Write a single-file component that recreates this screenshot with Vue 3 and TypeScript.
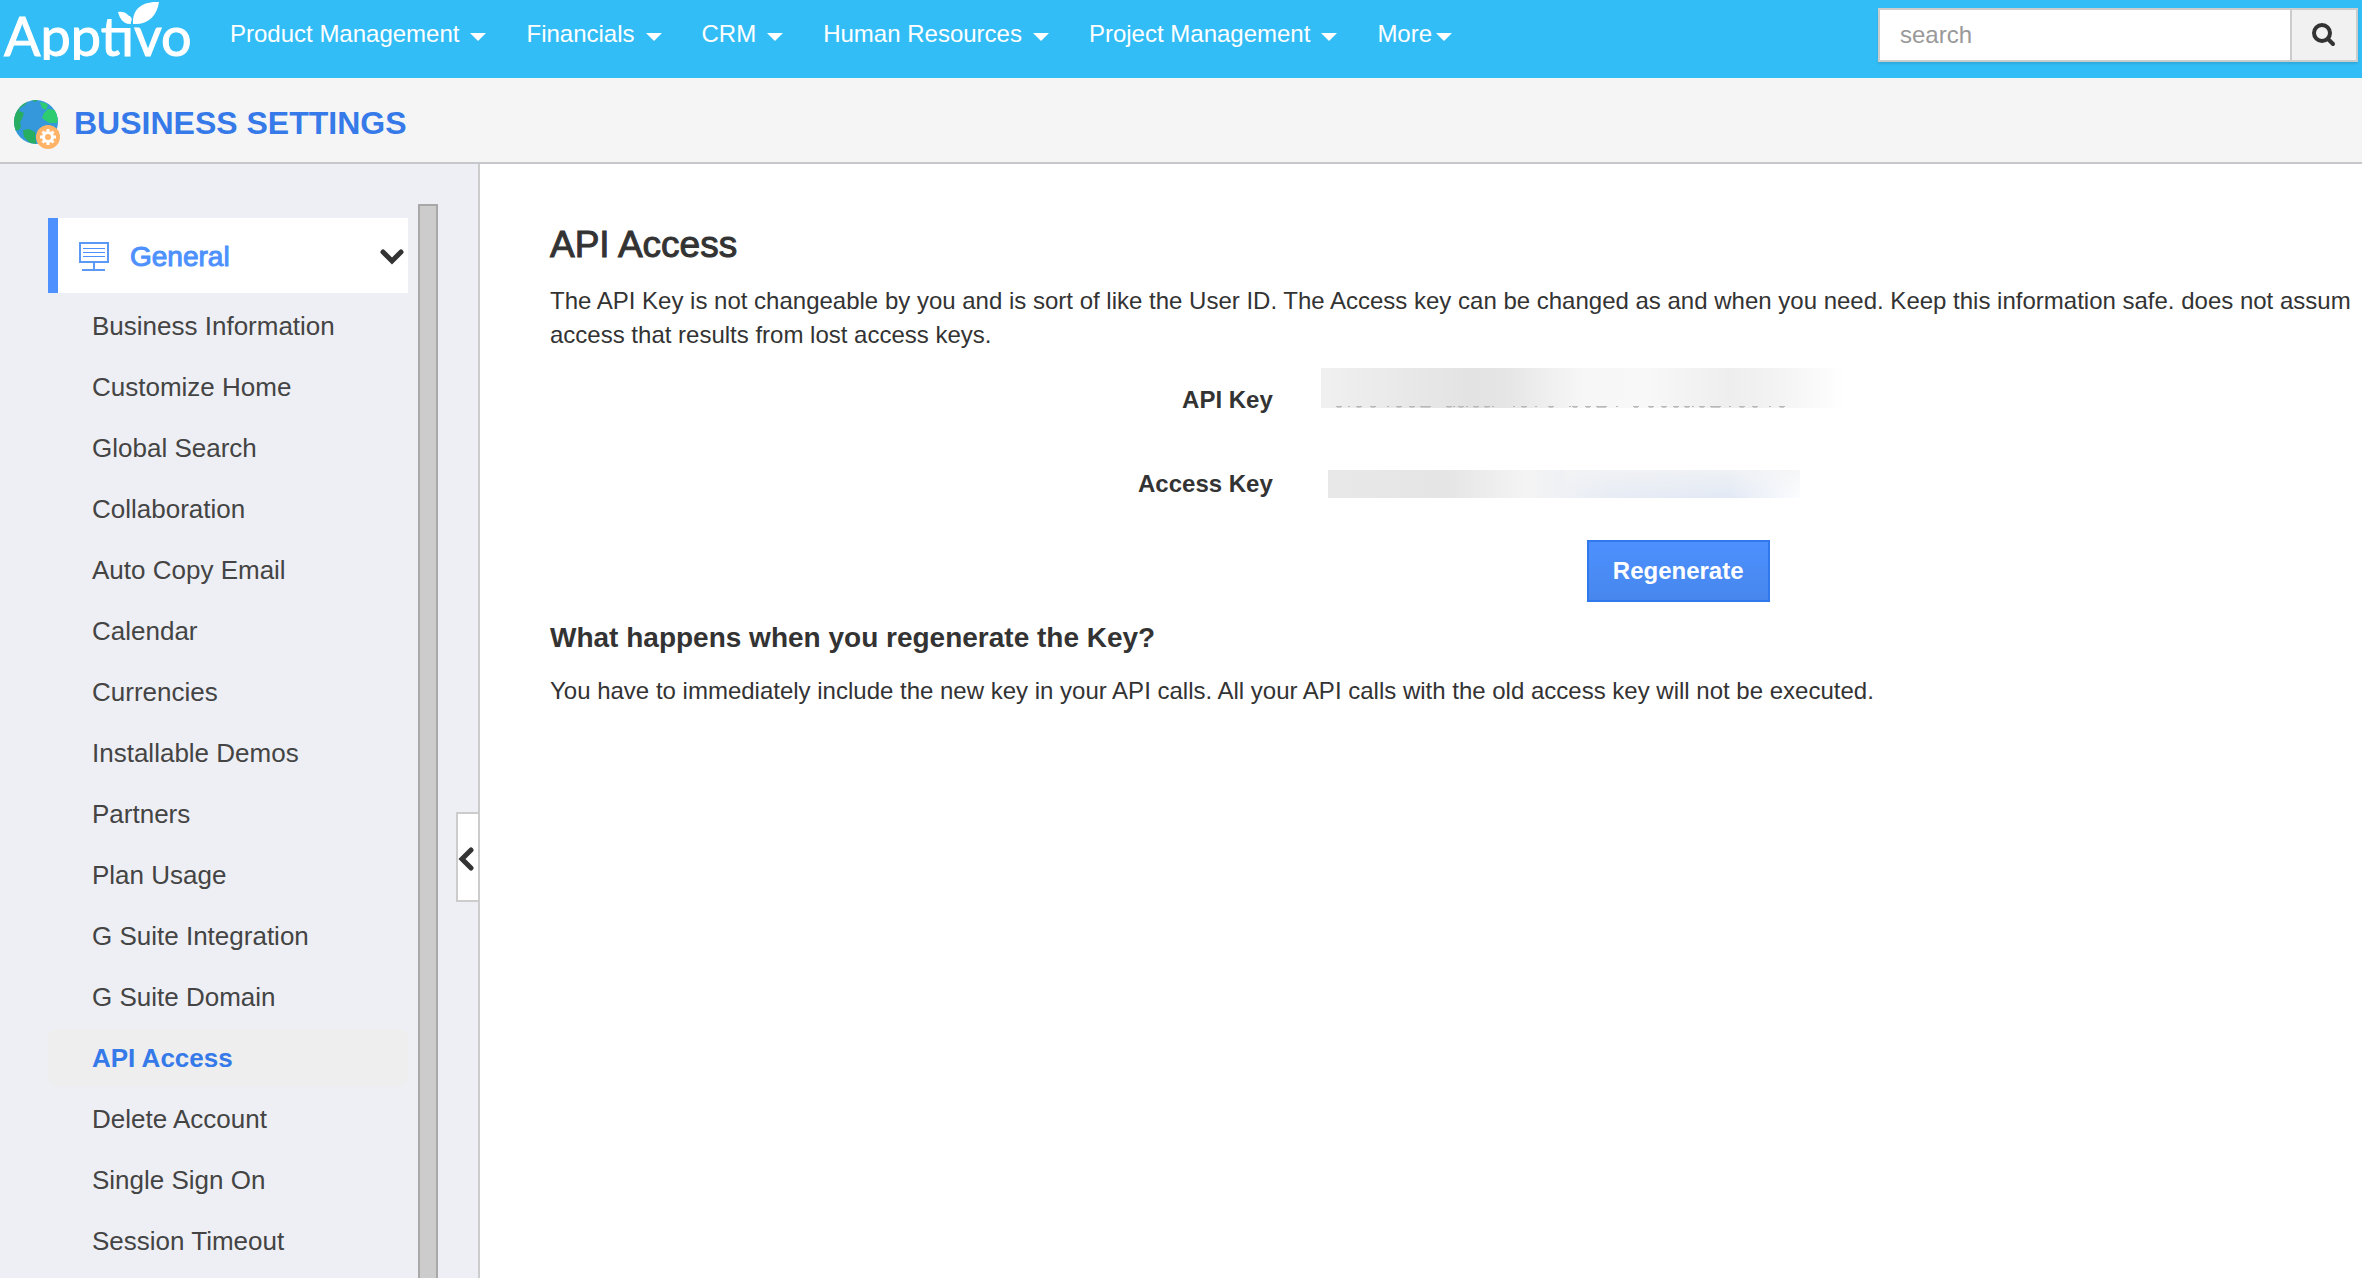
<script setup lang="ts">
import { ref } from 'vue'

interface NavItem {
  label: string
  tight?: boolean
}

interface Trace {
  x: number
  w: number
}

const navItems: NavItem[] = [
  { label: 'Product Management' },
  { label: 'Financials' },
  { label: 'CRM' },
  { label: 'Human Resources' },
  { label: 'Project Management' },
  { label: 'More', tight: true },
]

const menuItems: string[] = [
  'Business Information',
  'Customize Home',
  'Global Search',
  'Collaboration',
  'Auto Copy Email',
  'Calendar',
  'Currencies',
  'Installable Demos',
  'Partners',
  'Plan Usage',
  'G Suite Integration',
  'G Suite Domain',
  'API Access',
  'Delete Account',
  'Single Sign On',
  'Session Timeout',
]

// Marks left along the lower edge of the redacted key
const traces: Trace[] = [
  ...[18, 38, 52, 78, 91, 128, 140, 155, 166, 203, 230, 254, 267, 315, 330, 343, 355, 366, 381, 421, 434, 461].map(
    (x) => ({ x: x - 3, w: 6 }),
  ),
  ...[28, 67, 133, 146, 172, 193, 215, 249, 296, 372, 409, 449].map((x) => ({ x: x - 1, w: 2 })),
  ...[104, 280, 394].map((x) => ({ x: x - 5, w: 11 })),
]

const active = ref('API Access')
const query = ref('')
</script>

<template>
  <div class="app">
    <header class="topbar">
      <a class="logo" href="#">
        <span class="logo-text">Apptivo</span>
        <svg class="logo-leaves" width="44" height="26" viewBox="0 0 44 26" aria-hidden="true">
          <path fill="#fff" d="M16 24C15 10 24 1 42 2C40 16 31 25 16 24Z" />
          <path fill="#fff" d="M14 24C13 15 9 11 1 12C3 20 7 24 14 24Z" />
        </svg>
      </a>
      <nav class="nav">
        <a v-for="item in navItems" :key="item.label" href="#" class="nav-link" :class="{ tight: item.tight }">
          {{ item.label }}<span class="caret"></span>
        </a>
      </nav>
      <form class="search" @submit.prevent>
        <input v-model="query" type="text" placeholder="search" aria-label="search" />
        <button type="submit" aria-label="Submit search">
          <svg width="24" height="24" viewBox="0 0 24 24" fill="none" stroke="#333" aria-hidden="true">
            <circle cx="10" cy="10" r="8" stroke-width="4" />
            <path d="M16 16L21 21" stroke-width="4" stroke-linecap="round" />
          </svg>
        </button>
      </form>
    </header>

    <div class="titlebar">
      <svg width="48" height="50" viewBox="0 0 48 50" aria-hidden="true">
        <defs>
          <clipPath id="globe"><circle cx="22" cy="22" r="22" /></clipPath>
        </defs>
        <circle cx="22" cy="22" r="22" fill="#3498db" />
        <g clip-path="url(#globe)">
          <path fill="#27ae60" d="M15 0L11 5L6 8L5 11L10 13L8 19L6 22L7 27L5 30L0 31V0Z" />
          <path fill="#27ae60" d="M9 30L15 29L21 32L22 44L16 43L10 37Z" />
          <path fill="#2ecc71" d="M26 2L31 3L34 5L32 10L28 8ZM34 9L42 10L44 20L43 23L36 23L32 21L28 18L30 13Z" />
          <path fill="#27ae60" d="M17 0H24L21 2Z" />
        </g>
        <circle cx="34" cy="37" r="12" fill="#ffb366" />
        <path stroke="#fff" stroke-width="3" d="M34 29V45M26 37H42M28.500 31.500L39.500 42.500M28.500 42.500L39.500 31.500" />
        <circle cx="34" cy="37" r="6" fill="#fff" />
        <circle cx="34" cy="37" r="3" fill="#ffb366" />
      </svg>
      <h1>BUSINESS SETTINGS</h1>
    </div>

    <div class="layout">
      <aside class="sidebar">
        <div class="menu">
          <button type="button" class="section">
            <svg width="30" height="30" viewBox="0 0 30 30" fill="none" stroke="#4d90fe" aria-hidden="true">
              <path stroke-width="2" stroke="#5c98f5" d="M1 1H29V20H1ZM15 21V27M3 28H26" />
              <path stroke-width="1" d="M4 6.5H26M4 10.500H26M4 14.500H26" />
            </svg>
            <span>General</span>
            <svg class="chevron" width="24" height="16" viewBox="0 0 24 16" fill="none" aria-hidden="true">
              <path d="M3 3L12 12L21 3" stroke="#333" stroke-width="5" stroke-linecap="round" />
            </svg>
          </button>
          <ul>
            <li v-for="label in menuItems" :key="label">
              <a href="#" :class="{ active: label === active }" @click.prevent="active = label">{{ label }}</a>
            </li>
          </ul>
        </div>
        <div class="track"></div>
        <button type="button" class="collapse" aria-label="Collapse menu">
          <svg width="16" height="24" viewBox="0 0 16 24" fill="none" aria-hidden="true">
            <path d="M13 3L4 12L13 21" stroke="#333" stroke-width="5" stroke-linecap="round" />
          </svg>
        </button>
      </aside>

      <main class="content">
        <h2>API Access</h2>
        <p>
          The API Key is not changeable by you and is sort of like the User ID. The Access key can be changed as and when you need. Keep this information safe. does not assum<br />
          access that results from lost access keys.
        </p>
        <dl>
          <dt>API Key</dt>
          <dd>
            <div class="mask api">
              <svg width="524" height="40" viewBox="0 0 524 40" aria-hidden="true">
                <g v-for="t in traces" :key="t.x">
                  <rect :x="t.x" y="38" :width="t.w" height="1" fill="#b8b8b8" />
                  <rect :x="t.x + 1" y="39" :width="Math.max(t.w - 2, 0)" height="1" fill="#ccc" />
                </g>
              </svg>
            </div>
          </dd>
          <dt>Access Key</dt>
          <dd><div class="mask access"></div></dd>
        </dl>
        <div class="actions">
          <button type="button" class="primary">Regenerate</button>
        </div>
        <h3>What happens when you regenerate the Key?</h3>
        <p>You have to immediately include the new key in your API calls. All your API calls with the old access key will not be executed.</p>
      </main>
    </div>
  </div>
</template>

<style>
body {
  margin: 0;
}
</style>

<style scoped>
.app {
  display: flex;
  flex-direction: column;
  min-height: 100vh;
  overflow: hidden;
  font-family: "Liberation Sans", Arial, sans-serif;
  font-size: 24px;
  color: #333;
  background: #fff;
}
.app *,
.app {
  box-sizing: border-box;
}
a {
  text-decoration: none;
}
button,
input {
  font: inherit;
  margin: 0;
}
svg {
  display: block;
  flex: none;
}

.topbar {
  display: flex;
  height: 78px;
  background: #33bdf6;
}
.logo {
  position: relative;
  width: 230px;
  height: 60px;
  padding-left: 4px;
  overflow: hidden;
  color: #fff;
  font-family: Lato, sans-serif;
  font-size: 54px;
  line-height: 72px;
  -webkit-text-stroke: 1px #fff;
}
.logo-leaves {
  position: absolute;
  left: 117px;
  top: 0;
}
.nav {
  display: flex;
  gap: 40px;
  height: 68px;
  align-items: center;
}
.nav-link {
  display: flex;
  align-items: center;
  gap: 11px;
  color: #fff;
  white-space: nowrap;
}
.nav-link.tight {
  gap: 4px;
}
.caret {
  border: 8px solid transparent;
  border-top-color: #fff;
  border-bottom: 0;
  margin-top: 6px;
}
.search {
  display: flex;
  width: 480px;
  height: 54px;
  margin: 8px 4px 0 auto;
  border: 2px solid #ccc;
  box-shadow: 0 2px 2px rgba(0, 0, 0, 0.1);
}
.search input {
  flex: 1;
  min-width: 0;
  padding: 0 20px;
  border: 0;
  color: #333;
  background: #fff;
}
.search input::placeholder {
  color: #999;
  opacity: 1;
}
.search button {
  width: 66px;
  padding: 0 0 0 20px;
  border: 0;
  border-left: 2px solid #ccc;
  background: #f1f1f1;
}

.titlebar {
  display: flex;
  align-items: center;
  gap: 12px;
  height: 86px;
  padding: 10px 0 0 14px;
  border-bottom: 2px solid #c6c7ca;
  background: #f5f5f5;
}
h1 {
  margin: 0 0 4px;
  font-size: 32px;
  line-height: 40px;
  color: #357ae8;
}

.layout {
  display: flex;
  flex: 1;
}
.sidebar {
  display: flex;
  flex: none;
  width: 480px;
  padding-left: 48px;
  border-right: 2px solid #ccc;
  background: #eeeff4;
}
.menu {
  width: 360px;
  padding-top: 54px;
}
.section {
  display: flex;
  align-items: center;
  gap: 21px;
  width: 100%;
  height: 75px;
  padding: 2px 4px 0 21px;
  border: 0;
  border-left: 10px solid #4d90fe;
  background: #fff;
  color: #4d90fe;
  font-size: 28px;
  -webkit-text-stroke: 1px #4d90fe;
}
.chevron {
  margin-left: auto;
}
ul {
  display: flex;
  flex-direction: column;
  gap: 3px;
  margin: 0;
  padding: 4px 0 0;
  list-style: none;
}
li a {
  display: block;
  padding-left: 44px;
  border-radius: 8px;
  line-height: 58px;
  font-size: 26px;
  color: #444;
}
li a.active {
  background: #eee;
  color: #357ae8;
  font-weight: bold;
}
.track {
  width: 20px;
  margin: 40px 18px 0 10px;
  border: 2px solid #a8a8a8;
  border-bottom: 0;
  background: #ccc;
}
.collapse {
  width: 22px;
  height: 90px;
  margin-top: 648px;
  padding: 4px 0 0;
  border: 2px solid #ccc;
  border-right: 0;
  background: #fff;
}

.content {
  flex: 1;
  min-width: 0;
  padding: 57px 0 0 70px;
}
h2 {
  margin: 0 0 15px;
  font-size: 37px;
  font-weight: normal;
  line-height: 48px;
  -webkit-text-stroke: 1px #333;
}
p {
  margin: 0;
  line-height: 34px;
  white-space: nowrap;
}
dl {
  display: grid;
  grid-template-columns: 40% 1fr;
  grid-auto-rows: 84px;
  column-gap: 46px;
  margin: 2px 0 18px;
}
dt {
  padding: 32px 2px 0 0;
  text-align: right;
  font-weight: bold;
}
dd {
  margin: 0;
}
.mask.api {
  width: 524px;
  height: 40px;
  margin-top: 14px;
  background: linear-gradient(90deg, #f0f0f0, #e3e3e3 28%, #e5e5e5 35%, #f7f7f7 50%, #f8f8f8 62%, #eee 78%, #f3f3f3 87%, #fff);
}
.mask.access {
  width: 472px;
  height: 28px;
  margin: 32px 0 0 7px;
  background:
    linear-gradient(rgba(244, 244, 244, 0.7), rgba(244, 244, 244, 0)) right / 50% 100% no-repeat,
    linear-gradient(90deg, #e8e8e8, #e5e5e5 25%, #f4f4f4 42%, #e7ecf5 60%, #e2e9f5 85%, #fcfdff);
}
.actions {
  padding-left: calc(57% + 4px);
}
.primary {
  height: 62px;
  padding: 0 24px;
  border: 2px solid #3079ed;
  background: linear-gradient(#4d90fe, #4787ed);
  color: #fff;
  font-weight: bold;
}
h3 {
  margin: 16px 0;
  font-size: 28px;
  line-height: 40px;
}
</style>
